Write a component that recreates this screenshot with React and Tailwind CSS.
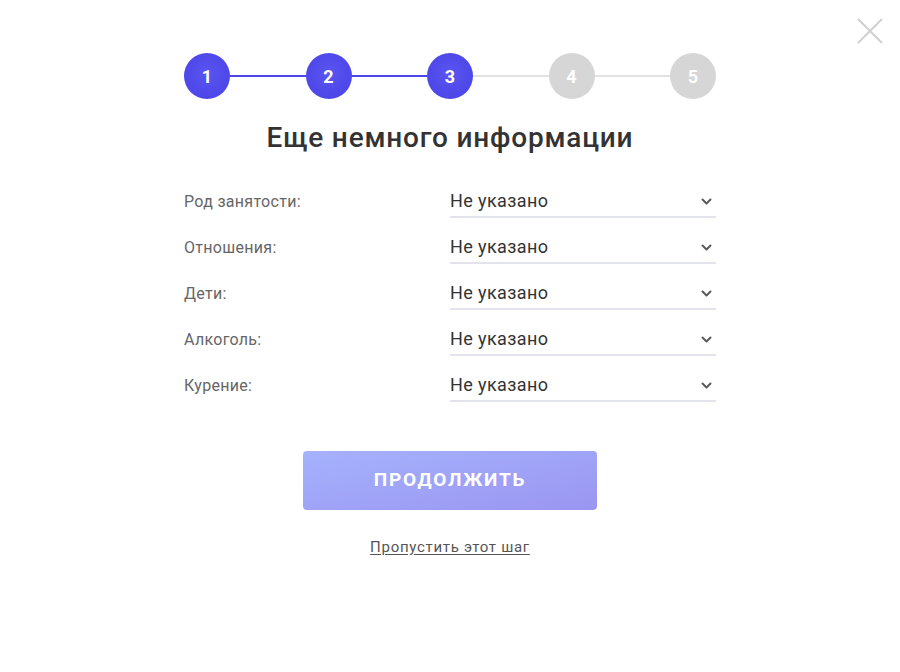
import React from 'react';

const steps = [1, 2, 3, 4, 5];
const current = 3;

const fields = ['Род занятости:', 'Отношения:', 'Дети:', 'Алкоголь:', 'Курение:'];

function Chevron() {
  return (
    <svg width="11" height="7" viewBox="0 0 11 7" fill="none">
      <path d="M1.5 1.5L5.5 5.5L9.5 1.5" stroke="#5a5a5a" strokeWidth="2" strokeLinecap="round" strokeLinejoin="round" />
    </svg>
  );
}

export default function App() {
  return (
    <div className="relative w-[900px] h-[672px] bg-white font-['Roboto',sans-serif] overflow-hidden">
      {/* close */}
      <button className="absolute top-[18px] right-[17px] w-[26px] h-[26px]" aria-label="Закрыть">
        <svg width="26" height="26" viewBox="0 0 26 26" fill="none">
          <path d="M1 1L25 25M25 1L1 25" stroke="#d0d0d0" strokeWidth="2" />
        </svg>
      </button>

      <div className="w-[532px] mx-auto pt-[53px] flex flex-col">
        {/* stepper */}
        <div className="flex items-center">
          {steps.map((s, i) => (
            <React.Fragment key={s}>
              {i > 0 && (
                <div className={s <= current ? 'flex-1 h-[2px] bg-[#4b44e8]' : 'flex-1 h-[2px] bg-[#e2e2e2]'} />
              )}
              <div
                className={
                  s <= current
                    ? 'w-[46px] h-[46px] rounded-full flex items-center justify-center text-white text-[18px] font-bold bg-[radial-gradient(circle_at_50%_45%,#5a55f0,#4840e6)]'
                    : 'w-[46px] h-[46px] rounded-full flex items-center justify-center text-white text-[18px] font-bold bg-[#d6d6d6]'
                }
              >
                {s}
              </div>
            </React.Fragment>
          ))}
        </div>

        <h1 className="mt-[21px] text-center text-[28px] font-medium tracking-[0.8px] text-[#333] leading-[36px]">
          Еще немного информации
        </h1>

        {/* fields */}
        <div className="mt-[32px] flex flex-col gap-[16px]">
          {fields.map((f) => (
            <div key={f} className="flex items-center">
              <div className="w-[266px] text-[16px] tracking-[0.3px] text-[#666] pb-[2px]">{f}</div>
              <div className="flex-1 flex items-center justify-between h-[30px] border-b-2 border-[#e3e3ec]">
                <span className="text-[18px] tracking-[0.4px] text-[#333] pb-[4px]">Не указано</span>
                <span className="pr-[4px] pb-[2px]"><Chevron /></span>
              </div>
            </div>
          ))}
        </div>

        <button className="mt-[49px] self-center w-[294px] h-[59px] rounded-[4px] bg-gradient-to-br from-[#a5b2fd] to-[#9a95f1] text-white text-[19px] font-bold tracking-[1.8px]">
          ПРОДОЛЖИТЬ
        </button>

        <a href="#" className="mt-[26px] self-center text-[15px] tracking-[0.7px] text-[#555] underline underline-offset-2">
          Пропустить этот шаг
        </a>
      </div>
    </div>
  );
}
